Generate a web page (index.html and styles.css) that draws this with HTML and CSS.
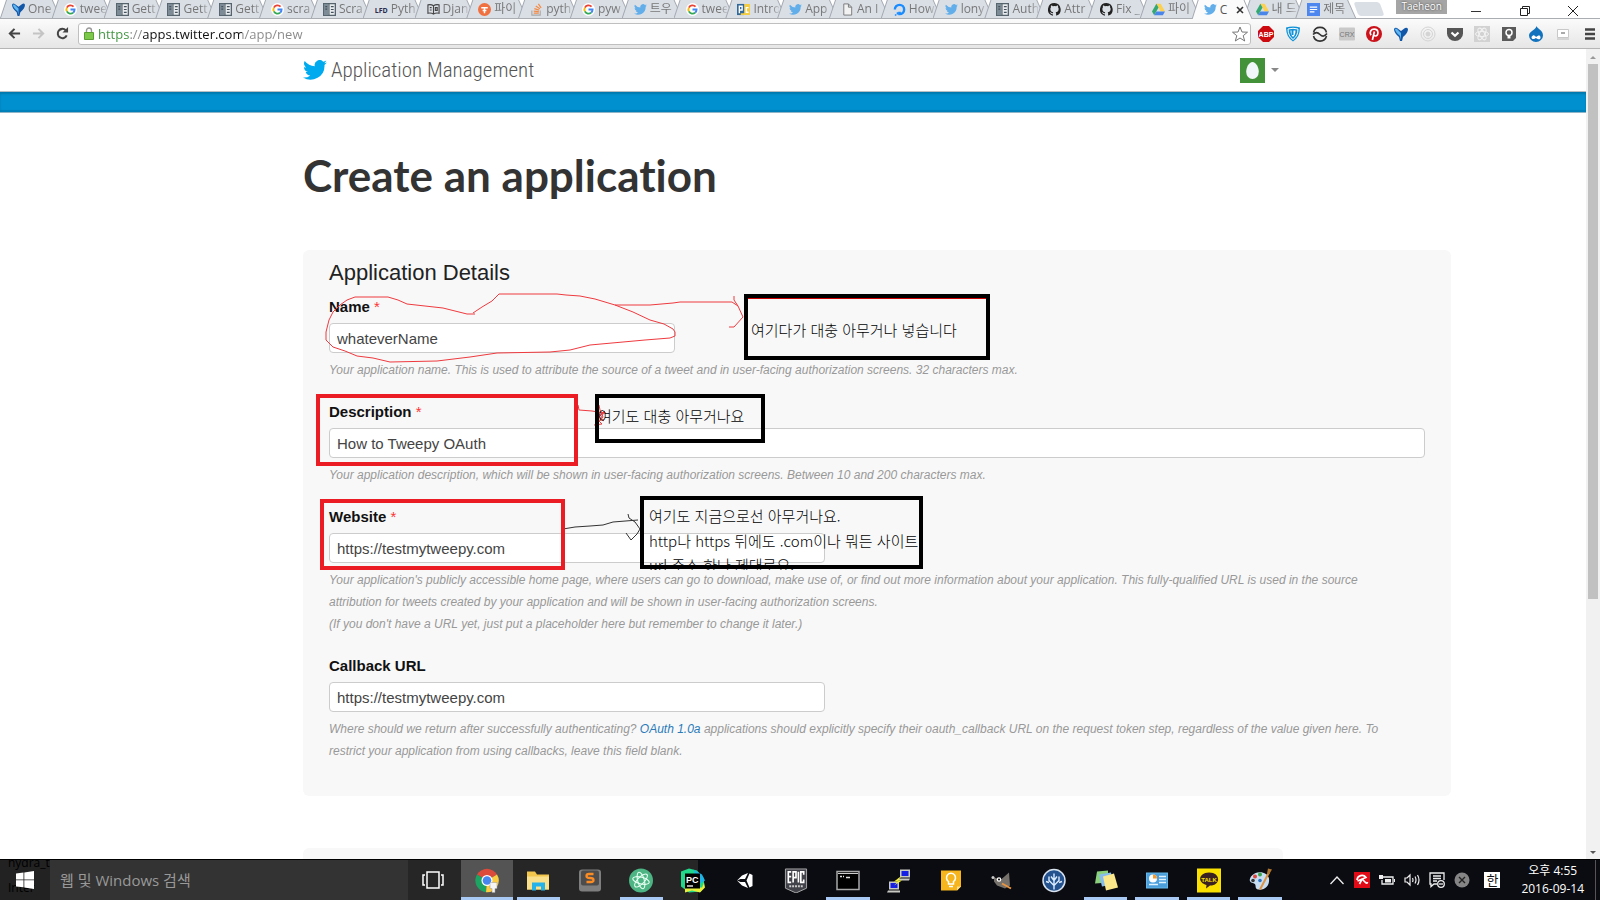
FILE: index.html
```html
<!DOCTYPE html>
<html lang="ko">
<head>
<meta charset="utf-8">
<title>Create an application | Twitter Application Management</title>
<link rel="stylesheet" href="styles.css">
</head>
<body>
<svg class="defs" aria-hidden="true">
  <symbol id="bird" viewBox="0 0 24 20"><path d="M24 2.400a9.800 9.800 0 0 1-2.800.8A4.900 4.900 0 0 0 23.300.5a9.900 9.900 0 0 1-3.100 1.200 4.900 4.900 0 0 0-8.400 4.500A14 14 0 0 1 1.700 1a4.900 4.900 0 0 0 1.500 6.600A4.900 4.900 0 0 1 1 7v.1a4.900 4.900 0 0 0 3.900 4.800 5 5 0 0 1-2.200.1 4.900 4.900 0 0 0 4.600 3.400A9.900 9.900 0 0 1 0 17.500 14 14 0 0 0 21.500 5z"/></symbol>
  <symbol id="google" viewBox="0 0 14 14"><circle cx="7" cy="7" r="7" fill="#fff"/><g fill="none" stroke-width="2"><path d="M10.300 4A4.400 4.400 0 0 0 3.100 5" stroke="#ea4335"/><path d="M3.100 5a4.400 4.400 0 0 0 0 4" stroke="#fbbc05"/><path d="M3.100 9a4.400 4.400 0 0 0 6.800 1.400" stroke="#34a853"/><path d="M9.900 10.400A4.400 4.400 0 0 0 11.400 7H7" stroke="#4285f4"/></g></symbol>
  <symbol id="docs" viewBox="0 0 14 14"><path d="M.7.7h12.600v12.600H.7z" fill="#e8ecef" stroke="#56636d" stroke-width="1.400"/><path d="M1 1h5v12H1z" fill="#7c8b96"/><path d="M6.500 1v12" stroke="#46525b"/><path d="M2.500 4h2m-2 2.500h2m4-2.500h3m-3 3h3m-3 3h3" stroke="#46525b" stroke-width="1.300"/></symbol>
  <symbol id="yfork" viewBox="0 0 14 14"><path d="M0 2Q1 0 3 1L7 4l4-3q2-1 3 1 0 4-5 8l-1 4H6l-1-4Q0 6 0 2z" fill="#1257a8"/><path d="M1 2q1-1 2 0l4 4v7l-1-4Q1 5 1 2z" fill="#5fb6f0"/></symbol>
  <symbol id="github" viewBox="0 0 16 16"><path d="M8 0a8 8 0 0 0-2.500 15.600c.4.100.500-.2.500-.4v-1.500c-2.200.5-2.700-1-2.700-1-.4-.9-.9-1.200-.9-1.200-.7-.5.1-.5.1-.5.800.1 1.200.8 1.200.8.7 1.300 1.900.9 2.300.7.100-.5.300-.9.500-1.100-1.800-.2-3.600-.9-3.600-4 0-.9.300-1.600.800-2.100-.1-.2-.4-1 .1-2.100 0 0 .7-.2 2.200.8a8 8 0 0 1 4 0c1.500-1 2.200-.8 2.200-.8.4 1.100.2 1.900.1 2.100.5.600.8 1.300.8 2.100 0 3.100-1.900 3.700-3.700 3.900.3.300.6.800.6 1.500v2.200c0 .2.100.5.600.4A8 8 0 0 0 8 0z" fill="#222"/></symbol>
  <symbol id="drive" viewBox="0 0 15 13"><path d="M5 0h5l5 8.700h-5z" fill="#fdd050"/><path d="M5 0l2.500 4.300L2.500 13 0 8.700z" fill="#34a871"/><path d="M5 8.700h10L12.500 13h-10z" fill="#4a86ea"/></symbol>
  <symbol id="stack" viewBox="0 0 14 14"><path d="M2 8v5h9V8" fill="none" stroke="#a8a8a8" stroke-width="1.200"/><path d="M4 11h5.500M4 8.700l5.500.6M4.700 6l5.200 1.700M6.200 3.200l4.500 3M9 1l3 4.200" stroke="#f48b45" stroke-width="1.300"/></symbol>
</svg>

<header class="browser">
  <div class="titlebar">
    <nav class="tabs" aria-label="Tabs">
      <a class="tab" href="#"><svg class="fav"><use href="#yfork"/></svg><span>One</span></a>
      <a class="tab" href="#"><svg class="fav"><use href="#google"/></svg><span>twee</span></a>
      <a class="tab" href="#"><svg class="fav"><use href="#docs"/></svg><span>Gett</span></a>
      <a class="tab" href="#"><svg class="fav"><use href="#docs"/></svg><span>Gett</span></a>
      <a class="tab" href="#"><svg class="fav"><use href="#docs"/></svg><span>Gett</span></a>
      <a class="tab" href="#"><svg class="fav"><use href="#google"/></svg><span>scra</span></a>
      <a class="tab" href="#"><svg class="fav"><use href="#docs"/></svg><span>Scra</span></a>
      <a class="tab" href="#"><b class="fav lfd">LFD</b><span>Pyth</span></a>
      <a class="tab" href="#"><svg class="fav" viewBox="0 0 14 14" fill="none" stroke="#444" stroke-width="1.200"><path d="M7 3C5 1.500 3 1.500 1 2v9c2-.5 4-.5 6 1 2-1.500 4-1.500 6-1V2c-2-.5-4-.5-6 1zv9M3 5h2M3 7.500h2M9 5h2v3H9z"/></svg><span>Djan</span></a>
      <a class="tab" href="#"><svg class="fav" viewBox="0 0 14 14"><circle cx="7" cy="7" r="7" fill="#f0713f"/><path d="M3.500 5h7M7 5v6M5 8h4" stroke="#fff" stroke-width="1.600"/></svg><span>파이</span></a>
      <a class="tab" href="#"><svg class="fav"><use href="#stack"/></svg><span>pyth</span></a>
      <a class="tab" href="#"><svg class="fav"><use href="#google"/></svg><span>pyw</span></a>
      <a class="tab" href="#"><svg class="fav sky"><use href="#bird"/></svg><span>트우</span></a>
      <a class="tab" href="#"><svg class="fav"><use href="#google"/></svg><span>twee</span></a>
      <a class="tab" href="#"><svg class="fav" viewBox="0 0 14 14"><path d="M0 1h8v12H0z" fill="#31699b"/><path d="M8 1h6v12H4v-2h4z" fill="#f5cd42"/><path d="M2.500 11V3.500h3v4h-3M12.500 5H10v5h2.500" fill="none" stroke="#fff" stroke-width="1.500"/></svg><span>Intro</span></a>
      <a class="tab" href="#"><svg class="fav sky"><use href="#bird"/></svg><span>App</span></a>
      <a class="tab" href="#"><svg class="fav" viewBox="0 0 14 14"><path d="M3 1h5l3.500 3.500V13H3zM8 1v3.500h3.500" fill="#f2f2f2" stroke="#777"/></svg><span>An I</span></a>
      <a class="tab" href="#"><svg class="fav" viewBox="0 0 14 14"><path d="M2 7a5 5 0 1 1 5 5V9.500" fill="none" stroke="#1a8cff" stroke-width="2.600"/><path d="M4 10h2.300v2.300H4zM2 12h1.600v1.600H2z" fill="#1a8cff"/></svg><span>How</span></a>
      <a class="tab" href="#"><svg class="fav sky"><use href="#bird"/></svg><span>lony</span></a>
      <a class="tab" href="#"><svg class="fav"><use href="#docs"/></svg><span>Auth</span></a>
      <a class="tab" href="#"><svg class="fav"><use href="#github"/></svg><span>Attr</span></a>
      <a class="tab" href="#"><svg class="fav"><use href="#github"/></svg><span>Fix _</span></a>
      <a class="tab" href="#"><svg class="fav"><use href="#drive"/></svg><span>파이</span></a>
      <a class="tab active" href="#"><svg class="fav sky"><use href="#bird"/></svg><span>C</span><svg class="tabx" viewBox="0 0 8 8"><path d="M1 1l6 6M7 1L1 7" stroke="#333" stroke-width="1.600"/></svg></a>
      <a class="tab" href="#"><svg class="fav"><use href="#drive"/></svg><span>내 드</span></a>
      <a class="tab" href="#"><svg class="fav" viewBox="0 0 14 14"><path d="M0 0h14v14H0z" fill="#4d86ee"/><path d="M3 4.500h8M3 7h8M3 9.500h5" stroke="#fff" stroke-width="1.300"/></svg><span>제목</span></a>
    </nav>
    <button class="newtab" aria-label="New tab"></button>
    <span class="profile">Taeheon</span>
    <div class="winbtns">
      <button aria-label="Minimize"><svg viewBox="0 0 12 12"><path d="M1 6.500h10" stroke="#333"/></svg></button>
      <button aria-label="Restore"><svg viewBox="0 0 12 12" fill="none" stroke="#222"><path d="M1.500 3.500h7v7h-7zM3.500 3.500v-2h7v7h-2"/></svg></button>
      <button aria-label="Close"><svg viewBox="0 0 12 12"><path d="M1 1l10 10M11 1L1 11" stroke="#222"/></svg></button>
    </div>
  </div>
  <div class="toolbar">
    <button aria-label="Back"><svg viewBox="0 0 14 14" fill="none" stroke="#444" stroke-width="2.200"><path d="M13 7H2M7 2L2 7l5 5"/></svg></button>
    <button aria-label="Forward"><svg viewBox="0 0 14 14" fill="none" stroke="#c4c4c4" stroke-width="2.200"><path d="M1 7h11M7 2l5 5-5 5"/></svg></button>
    <button aria-label="Reload"><svg viewBox="0 0 14 14"><path d="M11.500 9A5 5 0 1 1 10.500 3.500" fill="none" stroke="#444" stroke-width="2.200"/><path d="M13 0v6H7z" fill="#444"/></svg></button>
    <div class="omnibox">
      <svg class="lock" viewBox="0 0 10 13"><path d="M2.500 6V3.500a2.500 2.500 0 0 1 5 0V6" fill="none" stroke="#999" stroke-width="1.400"/><path d="M.5 5.500h9v7h-9z" fill="#7cc84a" stroke="#5a9e33"/></svg>
      <input class="url" type="text" aria-label="Address" value="https://apps.twitter.com/app/new">
      <svg class="star" viewBox="0 0 16 16"><path d="M8 1l2 5 5.500.2-4.300 3.500L12.700 15 8 12l-4.700 3 1.500-5.300L.5 6.200 6 6z" fill="#fff" stroke="#777"/></svg>
    </div>
    <div class="exts">
      <svg viewBox="0 0 16 16"><path d="M5 0h6l5 5v6l-5 5H5l-5-5V5z" fill="#cc0a10"/><text x="8" y="11" class="abp">ABP</text></svg>
      <svg viewBox="0 0 16 16"><path d="M1 1.500Q8-.5 15 1.500 15 11 8 15.500 1 11 1 1.500z" fill="#1292d6"/><path d="M3 3q5-1.500 10 0 0 7-5 10.500Q3 10 3 3z" fill="none" stroke="#fff"/><path d="M5.500 4.500h5c0 3-.8 5-2.500 6.500C6.500 9.500 5.500 7.500 5.500 4.500z" fill="#fff"/><path d="M7.500 4v5" stroke="#1292d6" stroke-width="2"/></svg>
      <svg viewBox="0 0 16 16" fill="none" stroke="#333" stroke-width="1.600"><path d="M1.500 6.500a6.700 6.700 0 0 1 13 0M14.500 10a6.700 6.700 0 0 1-13 0M1 8.500c2.500-2.500 4.500-2.500 7 0s4.500 2 7-1"/></svg>
      <svg viewBox="0 0 16 16"><rect y="1.500" width="16" height="13" rx="1" fill="#c9c9c9"/><text x="8" y="11" class="crx">CRX</text></svg>
      <svg viewBox="0 0 16 16"><circle cx="8" cy="8" r="8" fill="#cb1119"/><path d="M5 9.300C3 6 5 3.200 8.200 3.200c5 0 4.500 6.800 1.200 6.800-1 0-1.600-.7-1.600-.7M8.400 5.500L6.400 14" fill="none" stroke="#fff" stroke-width="1.700"/></svg>
      <svg viewBox="-1 -1 16 16"><use href="#yfork" width="14" height="14"/></svg>
      <svg viewBox="0 0 16 16" fill="none" stroke="#d4d4d4"><circle cx="8" cy="8" r="7"/><circle cx="8" cy="8" r="4.500"/><circle cx="8" cy="8" r="2" fill="#d4d4d4"/></svg>
      <svg viewBox="0 0 16 16"><path d="M0 2h16v5.500a8 7.500 0 0 1-16 0z" fill="#565656"/><path d="M4.500 6.500L8 9.800l3.500-3.300" fill="none" stroke="#fff" stroke-width="2.200"/></svg>
      <svg viewBox="0 0 16 16"><path d="M0 0h16v16H0z" fill="#d2d2d2"/><g fill="none" stroke="#f3f3f3"><ellipse cx="8" cy="8" rx="6.500" ry="2.600"/><ellipse cx="8" cy="8" rx="6.500" ry="2.600" transform="rotate(60 8 8)"/><ellipse cx="8" cy="8" rx="6.500" ry="2.600" transform="rotate(120 8 8)"/></g></svg>
      <svg viewBox="0 0 16 16"><path d="M1 1h14v11l-3 3H1z" fill="#5a5a5a"/><circle cx="8" cy="6.500" r="3" fill="none" stroke="#fff" stroke-width="1.500"/><path d="M6.500 9h3v3.500h-3z" fill="#fff"/></svg>
      <svg viewBox="0 0 16 16"><path d="M8.500 0C9 2.500 15 4 15 9.500a7 6.500 0 0 1-14 0C1 5 7.500 4.500 8.500 0z" fill="#1173bd"/><path d="M3.500 11c2-3 3-1.500 4.500 0 2-2 4.500-2.500 4.500.5S9 13 8 12c-1.500 1-4.500 2-4.500-1z" fill="#fff"/></svg>
      <svg viewBox="0 0 16 16"><path d="M2.500 3.500h11v8h-11z" fill="#fff" stroke="#c8c8c8"/><path d="M6 7h4" stroke="#aaa" stroke-width="2"/><path d="M2 13h12" stroke="#ccc" stroke-width="1.500"/></svg>
      <svg viewBox="0 0 16 16"><path d="M3 3.500h10M3 8h10M3 12.500h10" stroke="#444" stroke-width="2.400"/></svg>
    </div>
  </div>
</header>

<div class="viewport">
  <div class="page">
    <div class="masthead">
      <div class="container mastrow">
        <a class="brand" href="#"><svg class="brandbird"><use href="#bird"/></svg><span>Application Management</span></a>
        <button class="account" aria-label="Account"><svg class="avatar" viewBox="0 0 25 25"><path d="M0 0h25v25H0z" fill="#439138"/><path d="M12.500 4c3.500 0 6.300 5.500 6.300 9.800a6.300 7.200 0 0 1-12.600 0C6.200 9.500 9 4 12.500 4z" fill="#f1f6f8"/></svg><span class="caret"></span></button>
      </div>
    </div>
    <div class="ribbon"></div>
    <main class="container">
      <h1>Create an application</h1>
      <form class="panel details">
        <h3>Application Details</h3>
        <div class="field">
          <label for="name">Name <i>*</i></label>
          <input class="w-name" id="name" type="text" value="whateverName">
          <p>Your application name. This is used to attribute the source of a tweet and in user-facing authorization screens. 32 characters max.</p>
        </div>
        <div class="field">
          <label for="desc">Description <i>*</i></label>
          <input id="desc" type="text" value="How to Tweepy OAuth">
          <p>Your application description, which will be shown in user-facing authorization screens. Between 10 and 200 characters max.</p>
        </div>
        <div class="field">
          <label for="site">Website <i>*</i></label>
          <input class="w-url" id="site" type="text" value="https://testmytweepy.com">
          <p>Your application's publicly accessible home page, where users can go to download, make use of, or find out more information about your application. This fully-qualified URL is used in the source attribution for tweets created by your application and will be shown in user-facing authorization screens.<br>(If you don't have a URL yet, just put a placeholder here but remember to change it later.)</p>
        </div>
        <div class="field">
          <label for="callback">Callback URL</label>
          <input class="w-url" id="callback" type="text" value="https://testmytweepy.com">
          <p>Where should we return after successfully authenticating? <a href="#">OAuth 1.0a</a> applications should explicitly specify their oauth_callback URL on the request token step, regardless of the value given here. To restrict your application from using callbacks, leave this field blank.</p>
        </div>
        <svg class="notes" viewBox="303 250 1148 546" width="1148" height="546">
          <g class="pen red">
            <path d="M473 313L482 307 492 301 499 294H557L566 295 580 296 595 299 615 305 633 312 650 320 664 324 673 329 675 332V336L670 338 645 340 623 342 590 345 570 350 550 352 497 353 470 357 437 361 390 362 373 358 357 356 345 351 333 347 326 340V332L329 320 333 312 340 305 347 300 355 297H388L398 300 407 304 443 308 467 314H475"/>
            <path d="M615 305H650L673 303 680 302H732L738 306 743 317 734 327H729M734 296V300L738 306"/>
            <path d="M578 405L579 410 592 411 598 412 606 413M599 405L600 410 603 417 599 422 604 412 597 419 602 424 594 425M605 411L598 416 604 421"/>
          </g>
          <path class="pen black" d="M563 529L575 527 590 526 603 525 613 522 638 520M628 514L629 518 635 522 640 529 637 534 631 540 626 533"/>
          <g class="memo">
            <text x="751" y="336">여기다가 대충 아무거나 넣습니다</text>
            <text x="598" y="422">여기도 대충 아무거나요</text>
            <text x="649" y="522">여기도 지금으로선 아무거나요.</text>
            <text x="649" y="547">http나 https 뒤에도 .com이나 뭐든 사이트</text>
            <svg x="640" y="550" width="280" height="20" viewBox="640 550 280 20"><text x="649" y="571">url 주소 하나 제대로요.</text></svg>
          </g>
          <g class="frame">
            <rect x="746" y="296" width="242" height="62"/>
            <path class="redline" d="M748 298.500H986"/>
            <rect x="597" y="396" width="166" height="45"/>
            <rect x="642" y="498" width="279" height="69"/>
          </g>
          <g class="frame mark">
            <rect x="318" y="396" width="258" height="68"/>
            <rect x="322" y="501" width="241" height="67"/>
          </g>
        </svg>
      </form>
      <section class="panel agreement"></section>
    </main>
  </div>
  <div class="scrollbar"><span class="up"></span><span class="thumb"></span><span class="down"></span></div>
</div>

<footer class="taskbar">
  <button class="start" aria-label="Start"><span class="ghost">hydra_t<br>Inter</span><svg viewBox="0 0 18 18" fill="#fff"><path d="M0 2.500l7.500-1v7H0zM8.300 1.400L18 0v8.500H8.300zM0 9.300h7.500v7L0 15.400zM8.300 9.300H18V18l-9.700-1.500z"/></svg></button>
  <input class="search" type="text" aria-label="Search" placeholder="웹 및 Windows 검색">
  <button class="taskview" aria-label="Task view"><svg viewBox="0 0 22 18" fill="none" stroke="#fff" stroke-width="1.500"><path d="M5 1h12v16H5zM3 4H1v10h2M19 4h2v10h-2"/></svg></button>
  <nav class="apps" aria-label="Apps">
    <button class="on front" aria-label="Chrome"><svg viewBox="0 0 24 24"><path d="M12 12L2 6a11.700 11.700 0 0 1 20 0z" fill="#dc4a3c"/><path d="M12 12L2 6a11.700 11.700 0 0 0 9 17.700z" fill="#1da362"/><path d="M12 12l10-6A11.700 11.700 0 0 1 11 23.700z" fill="#fccd42"/><circle cx="12" cy="12" r="5.500" fill="#fff"/><circle cx="12" cy="12" r="4.300" fill="#4686f0"/><path d="M15 14h7v6h-2v4h-3v-4h-2z" fill="#f4f4f4" stroke="#999" stroke-width=".5"/></svg></button>
    <button class="on" aria-label="Explorer"><svg viewBox="0 0 24 24"><path d="M1 3h8l2 3h12v15H1z" fill="#f3c64c"/><path d="M1 8h22v13H1z" fill="#fbe08c"/><path d="M6 22v-8h13v8h-4v-4h-5v4z" fill="#25b2ea"/></svg></button>
    <button aria-label="Sublime Text"><svg viewBox="0 0 24 24"><rect x="1" y="1" width="22" height="22" rx="3" fill="#7e7e7e"/><rect x="3" y="2" width="18" height="15" rx="2" fill="#4c4c4c"/><path d="M15.500 5.500H11Q8.500 5.500 8.500 7.500T12 9.500t3.500 2-2.500 2H8.500" fill="none" stroke="#fb8b23" stroke-width="2.300"/></svg></button>
    <button class="on" aria-label="Atom"><svg viewBox="0 0 24 24"><circle cx="12" cy="12" r="12" fill="#4cb583"/><g fill="none" stroke="#e6fff2" stroke-width="1.100"><ellipse cx="12" cy="12" rx="8.500" ry="3.300" transform="rotate(15 12 12)"/><ellipse cx="12" cy="12" rx="8.500" ry="3.300" transform="rotate(75 12 12)"/><ellipse cx="12" cy="12" rx="8.500" ry="3.300" transform="rotate(135 12 12)"/></g></svg></button>
    <button aria-label="PyCharm"><svg viewBox="0 0 24 24"><path d="M0 3l8-3 8 2 7 8v5l-3 8-12 1-8-6z" fill="#21d789"/><path d="M12 1l9 5 3 6-5 3z" fill="#1cb4e6"/><path d="M4 19h17l2-5 1 5-5 5-8-2-7 2z" fill="#e8f03c"/><path d="M4 5h15v15H4z"/><text x="5" y="14" class="pc">PC</text><path d="M6 17.500h6" stroke="#fff" stroke-width="1.300"/></svg></button>
    <button aria-label="Unity"><svg viewBox="0 0 24 24" fill="#fff"><path d="M4 12l5-5 6-2.500L12 10.500H7.500zM4 12l5 5 6 2.500-3-6H7.500zM16.500 5l3 1.500V17.500l-3 1.500-3-7z"/></svg></button>
    <button aria-label="Epic Games"><svg viewBox="0 0 24 26"><path d="M1 1h22v20l-11 5-11-5z" fill="#42434a" stroke="#aaa"/><path d="M7 4H4v11h3M4 9h3M9 15V4h3v6H9M14.500 4v11M20 7V4h-3v11h3v-3" fill="none" stroke="#fff" stroke-width="1.700"/><path d="M5 19h14" stroke="#ccc" stroke-width="2" stroke-dasharray="2 1"/></svg></button>
    <button class="on" aria-label="Command Prompt"><svg viewBox="0 0 24 24"><path d="M1 3h22v18H1z" stroke="#a8a8a8" stroke-width="1.500"/><path d="M2 5h20" stroke="#ccc"/><path d="M4 8h2m1 0h1m2 1h4" stroke="#ddd" stroke-width="1.500"/></svg></button>
    <button aria-label="PuTTY"><svg viewBox="0 0 24 24"><path d="M13 1h10v8H13zM2 13h10v8H2zM11 10h12l-1 2H11zM1 22h12v2H0z" fill="#c9c9c4"/><path d="M14.500 2.500h7v5h-7zM3.500 14.500h7v5h-7z" fill="#1620e4"/><path d="M15 7l-8 6h4l-4 4 8-5h-4z" fill="#f4ef23"/></svg></button>
    <button aria-label="Keep"><svg viewBox="0 0 24 24"><path d="M2 2h20v16l-4 4H2z" fill="#f6b51c"/><path d="M22 18h-4v4z" fill="#ffe08a"/><path d="M9.500 15.500V13a4.500 4.500 0 1 1 5 0v2.500zM10 18h4" fill="none" stroke="#fff" stroke-width="1.500"/></svg></button>
    <button aria-label="GIMP"><svg viewBox="0 0 24 24"><path d="M4 9l7 2 8-7 1 13-5 3-8-3-3-4z" fill="#76716a"/><circle cx="9" cy="11" r="2.300" fill="#fff"/><circle cx="3" cy="9" r="1.500" fill="#ccc"/><circle cx="9" cy="11" r="1"/><path d="M12 15l9 5" stroke="#e89643" stroke-width="2"/></svg></button>
    <button aria-label="SourceTree"><svg viewBox="0 0 24 24"><circle cx="12" cy="12" r="11" fill="#24528f" stroke="#d7e2ee" stroke-width="1.500"/><path d="M12 21V5M12 17l5-5V8M12 17l-5-5V8M12 12l3-4M12 12L9 8M7 14l-3-1M17 14l3-1" fill="none" stroke="#dcecff" stroke-width="1.400"/></svg></button>
    <button class="on" aria-label="Sticky Notes"><svg viewBox="0 0 24 24"><path d="M3 3l11-1v12L1 15z" fill="#8bd07b"/><path d="M5 6l12-2 2 12-11 2z" fill="#87bdee"/><path d="M9 8l11-3 4 14-12 3z" fill="#fae88b"/></svg></button>
    <button class="on" aria-label="Control Panel"><svg viewBox="0 0 24 24"><path d="M1 4h22v16H1z" fill="#62b9ec"/><path d="M2 5h20v14H2z" fill="#4d9fdc"/><circle cx="8" cy="10" r="4" fill="#fff"/><path d="M8 10V6a4 4 0 0 1 4 4z" fill="#f39a31"/><path d="M14 8h7M14 11h7M14 14h7M4 16h9" stroke="#dff3ff" stroke-width="1.600"/></svg></button>
    <button class="on" aria-label="KakaoTalk"><svg viewBox="0 0 24 24"><path d="M0 0h24v24H0z" fill="#fae100"/><path d="M12 4c12 0 12 13 1 13l-4 3 .5-3.500C-.5 14 2 4 12 4z" fill="#3a2222"/><text x="12" y="13" class="talk">TALK</text></svg></button>
    <button class="on" aria-label="Paint"><svg viewBox="0 0 24 24"><path d="M3 8C8 1 20 3 21 10c1 8-5 12-11 11-4-1-1-5-4-6s-6-2-3-7z" fill="#c7def2"/><circle cx="7" cy="8" r="2" fill="#e0453b"/><circle cx="12" cy="6" r="2" fill="#3aa24b"/><circle cx="5" cy="12" r="1.800" fill="#333"/><circle cx="12" cy="12" r="1.800" fill="#2b73c8"/><path d="M12 21l9-17" stroke="#dd9343" stroke-width="2"/><path d="M19 5l1-5 4 1-3 5z" fill="#b0762e"/></svg></button>
  </nav>
  <div class="tray">
    <svg viewBox="0 0 16 16" fill="none" stroke="#eee" stroke-width="1.300"><path d="M1.500 12L8 5l6.500 7"/></svg>
    <svg viewBox="0 0 16 16"><path d="M0 0h16v16H0z" fill="#e00b17"/><path d="M3 8a5 5 0 0 1 9-2.500L3.500 9M8 7l3.500 3.500Q13 12 13.500 10M8 7l-2.500 5" fill="none" stroke="#fff" stroke-width="1.700"/></svg>
    <svg viewBox="0 0 16 16"><path d="M4 5h10v7H3V8" fill="none" stroke="#eee" stroke-width="1.300"/><path d="M6 7h6v3.500H6zM15 7h1v3h-1zM0 3h4v4H0z" fill="#eee"/></svg>
    <svg viewBox="0 0 16 16" fill="none" stroke="#eee" stroke-width="1.200"><path d="M1 6h2l3-3v10l-3-3H1zM8.500 6q1 2 0 4M11 4.500q2 3.500 0 7M13.500 3q3 5 0 10"/></svg>
    <svg viewBox="0 0 16 16" fill="none" stroke="#eee" stroke-width="1.300"><path d="M8 12H5l-3 2.500V12H1V1h14v7M4 4h8M4 6.500h8M4 9h4"/><circle cx="12" cy="12" r="3.300"/><path d="M10 12h4"/></svg>
    <svg viewBox="0 0 16 16"><circle cx="8" cy="8" r="7.500" fill="#858585"/><path d="M5 5l6 6M11 5l-6 6" stroke="#222" stroke-width="1.400"/></svg>
    <span class="ime">한</span>
    <time class="clock">오후 4:55<br>2016-09-14</time>
  </div>
</footer>
</body>
</html>
```

FILE: styles.css
```css
* { box-sizing: border-box; }
body {
  margin: 0;
  height: 100vh;
  display: flex;
  flex-direction: column;
  overflow: hidden;
  background: #fff;
  color: #111;
  font-family: "Liberation Sans", "Noto Sans CJK KR", sans-serif;
}
button { border: 0; padding: 0; background: none; font: inherit; color: inherit; }
a { text-decoration: none; color: inherit; }
svg { display: block; flex: none; }
.defs { position: absolute; width: 0; height: 0; }

/* Browser window */
.browser { flex: none; font-family: "Open Sans", "Noto Sans CJK KR", sans-serif; }
.titlebar { display: flex; height: 19px; background: #fff; border-bottom: 1px solid #aaadb2; }
.tabs { display: flex; width: 84.2%; flex: none; }
.tab {
  position: relative;
  flex: 1 1 0;
  min-width: 0;
  display: flex;
  align-items: center;
  gap: 3px;
  padding-left: 12px;
  color: #777;
  font-size: 12px;
  line-height: 18px;
  white-space: nowrap;
}
.tab::before, .tab::after {
  content: "";
  position: absolute;
  z-index: 0;
  inset: 0 -9px 0 0;
  background: #a3a8b0;
  clip-path: polygon(0 100%, 6px 0, calc(100% - 8px) 0, 100% 100%);
}
.tab::after {
  background: #dadfe6;
  clip-path: polygon(1px 100%, 7px 0, calc(100% - 9px) 0, calc(100% - 1px) 100%);
}
.tab > * { position: relative; z-index: 1; }
.tab span { flex: 1; margin-right: -2px; overflow: hidden; mask-image: linear-gradient(to right, #000 70%, #0003); }
.tab.active { color: #555; height: 19px; }
.tab.active::before, .tab.active::after { z-index: 1; }
.tab.active::after { background: #fbfbfb; }
.tab.active > * { z-index: 2; }
.tab.active span { margin-right: 0; mask-image: none; }
.fav { width: 13px; height: 13px; flex: none; }
.lfd { font-size: 7px; line-height: 15px; color: #2b2b4e; }
.sky { fill: #61aeea; }
.tabx { width: 8px; height: 8px; }
.newtab { width: 26px; height: 14px; margin: 2px 0 0 9px; background: #dadfe6; border-radius: 3px; transform: skewX(20deg); }
.profile { width: 51px; height: 14px; margin-left: 14px; background: #a5a5a5; color: #fff; font-size: 10px; line-height: 12px; text-align: center; text-shadow: 0 0 2px #333; }
.winbtns { flex: 1; display: flex; justify-content: space-between; padding: 3px 21px 0 23px; }
.winbtns svg { width: 12px; height: 12px; }

.toolbar {
  display: flex;
  align-items: center;
  height: 30px;
  padding: 0 5px 0 8px;
  gap: 11px;
  background: linear-gradient(#fbfbfb, #e6e6e6);
  border-bottom: 1px solid #b5b5b5;
}
.toolbar > button svg { width: 13px; height: 13px; }
.omnibox { flex: 1; display: flex; align-items: center; gap: 4px; height: 22px; margin-left: -2px; padding: 0 2px 0 5px; background: #fff; border: 1px solid #bfbfbf; border-radius: 3px; }
.lock { width: 10px; height: 13px; }
.star { width: 16px; height: 16px; }
.url {
  flex: 1;
  min-width: 0;
  height: 20px;
  border: 0;
  padding: 0;
  font: 13px/20px "Open Sans", sans-serif;
  background: linear-gradient(to right, #3c933c 32px, #888 32px 45px, #111 45px 144px, #888 144px);
  -webkit-background-clip: text;
  background-clip: text;
  -webkit-text-fill-color: transparent;
}
.exts { display: flex; gap: 11px; margin: 0 -3px 0 -4px; }
.exts svg { width: 16px; height: 16px; }
.abp { font: bold 7px "Liberation Sans", sans-serif; fill: #fff; text-anchor: middle; }
.crx { font: 7px "Liberation Sans", sans-serif; fill: #777; text-anchor: middle; }

/* Page */
.viewport { flex: 1; min-height: 0; display: flex; }
.page { flex: 1; min-width: 0; overflow: hidden; }
.container { width: 980px; max-width: 100%; margin: 0 auto; }
.masthead { height: 43px; border-bottom: 1px solid #b9bfc3; }
.mastrow { display: flex; justify-content: space-between; align-items: center; height: 42px; padding-right: 4px; }
.brand { display: flex; align-items: center; gap: 4px; font: 300 21px/30px "Roboto Condensed", "Liberation Sans Narrow", "Roboto", sans-serif; color: #555; }
.brandbird { width: 24px; height: 20px; fill: #00aaee; }
.account { display: flex; align-items: center; gap: 6px; }
.avatar { width: 25px; height: 25px; }
.caret { border: 4px solid transparent; border-top-color: #888; border-bottom: 0; }
.ribbon { height: 21px; background: #0090cf; border-bottom: 1px solid #8fb4c8; box-shadow: inset 0 2px 2px #0079ae, inset 0 -2px 1px #0080b8; }

h1 { margin: 36px 0 49px; font: bold 44px/52px "Lato", sans-serif; font-variant-ligatures: none; color: #333; }
.panel { background: #f8f8f8; border-radius: 6px; }
.details { position: relative; width: 1148px; padding: 9px 26px 34px; }
.agreement { height: 80px; margin-top: 52px; }
h3 { margin: 0 0 10px; font-size: 22px; line-height: 27px; font-weight: normal; color: #222; }
.field + .field { margin-top: 20px; }
.field label { display: block; margin-bottom: 5px; font-size: 15px; line-height: 22px; font-weight: bold; color: #111; }
.field label i { font-style: normal; font-weight: normal; color: #f33; }
.field input { display: block; width: 100%; height: 30px; padding: 0 7px; border: 1px solid #ccc; border-radius: 4px; background: #fff; color: #444; font: 15px/20px "Liberation Sans", sans-serif; }
.field .w-name { max-width: 346px; }
.field .w-url { max-width: 496px; }
.field p { margin: 6px 0 0; padding-right: 30px; font-size: 12px; line-height: 22px; font-style: italic; color: #999; }
.field p a { color: #2a7ab8; }

/* Hand-drawn notes over the form */
.notes { position: absolute; left: 0; top: 0; pointer-events: none; }
.pen { fill: none; stroke-width: 1; }
.pen.red { stroke: #ee3a3f; }
.pen.black { stroke: #333; }
.memo { font: 300 15px "Noto Sans CJK KR", sans-serif; fill: #000; }
.frame { fill: none; stroke: #000; stroke-width: 4; }
.frame .redline { stroke: #c00; stroke-width: 1; }
.mark { stroke: #ec1c24; }

.scrollbar { width: 14px; flex: none; display: flex; flex-direction: column; align-items: center; background: #f1f1f1; padding: 7px 0 5px; }
.scrollbar .up { border: 3px solid transparent; border-bottom-color: #999; border-top: 0; }
.scrollbar .thumb { width: 10px; height: 67%; margin-top: 5px; background: #c1c1c1; }
.scrollbar .down { margin-top: auto; border: 3px solid transparent; border-top-color: #555; border-bottom: 0; }

/* Taskbar */
.taskbar { flex: none; display: flex; height: 41px; background: linear-gradient(to right, #262626 698px, #0b0c11 698px); border-top: 1px solid #000; color: #fff; font-family: "Open Sans", "Noto Sans CJK KR", sans-serif; }
.start { position: relative; width: 50px; display: grid; place-items: center; overflow: hidden; background: #222; }
.start svg { position: relative; width: 18px; height: 18px; }
.ghost { position: absolute; left: 8px; top: -10px; color: #000; font-size: 12px; line-height: 25px; text-align: left; }
.search { width: 358px; border: 0; padding: 0 10px; background: #333; font: 15px/20px "Open Sans", "Noto Sans CJK KR", sans-serif; color: #fff; }
.search::placeholder { color: #999; opacity: 1; }
.taskview { width: 53px; display: grid; place-items: center; padding-right: 3px; }
.taskview svg { width: 22px; height: 18px; }
.apps { flex: none; display: flex; width: 825px; }
.apps button { flex: 1; position: relative; display: grid; place-items: center; }
.apps svg { width: 24px; height: 25px; }
.apps .on::after { content: ""; position: absolute; left: 4px; right: 4px; bottom: 0; height: 3px; background: #a9c9f5; }
.apps .front { background: #545454; }
.apps .front::after { left: 0; right: 0; }
.pc { font: bold 9px "Liberation Sans", sans-serif; fill: #fff; }
.talk { font: bold 6px "Liberation Sans", sans-serif; fill: #fae100; text-anchor: middle; }
.tray { flex: 1; display: flex; align-items: center; justify-content: flex-end; gap: 9px; margin-right: 4px; padding-right: 11px; border-right: 1px solid #555; }
.tray svg { width: 16px; height: 16px; }
.ime { width: 16px; height: 16px; margin-left: 5px; background: #fff; color: #111; font-size: 13px; line-height: 16px; text-align: center; }
.clock { margin-left: 12px; font-size: 12px; line-height: 18px; text-align: center; white-space: nowrap; }
```
